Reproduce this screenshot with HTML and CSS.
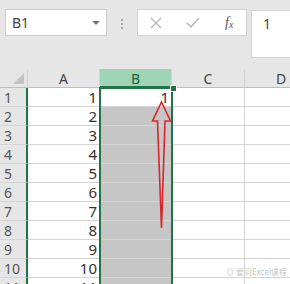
FILE: index.html
```html
<!DOCTYPE html>
<html lang="zh">
<head>
    <meta charset="UTF-8">
    <title>Sheet</title>
    <link rel="stylesheet" href="styles.css">
</head>
<body>
    <div class="toolbar">
        <div class="namebox">
            <span>B1</span>
            <span class="caret"></span>
        </div>
        <div class="grip"><i></i><i></i><i></i></div>
        <div class="fbuttons">
            <svg class="ico" width="12" height="12" viewBox="0 0 12 12"><path d="M1 1L11 11M11 1L1 11" stroke="#b4b4b4" stroke-width="1.3" fill="none"/></svg>
            <svg class="ico" width="14" height="11" viewBox="0 0 14 11"><path d="M1 6L5 10L13 1" stroke="#b4b4b4" stroke-width="1.4" fill="none"/></svg>
            <span class="fx">f<sub>x</sub></span>
        </div>
        <div class="finput">1</div>
    </div>

    <div class="sheet">
        <div class="grid">
            <div class="corner"><span class="tri"></span></div>
            <div class="colhead">A</div>
            <div class="colhead active">B</div>
            <div class="colhead">C</div>
            <div class="colhead">D</div>

            <div class="rowhead">1</div><div class="cell">1</div><div class="cell first">1</div><div class="cell"></div><div class="cell"></div>
            <div class="rowhead">2</div><div class="cell">2</div><div class="cell sel"></div><div class="cell"></div><div class="cell"></div>
            <div class="rowhead">3</div><div class="cell">3</div><div class="cell sel"></div><div class="cell"></div><div class="cell"></div>
            <div class="rowhead">4</div><div class="cell">4</div><div class="cell sel"></div><div class="cell"></div><div class="cell"></div>
            <div class="rowhead">5</div><div class="cell">5</div><div class="cell sel"></div><div class="cell"></div><div class="cell"></div>
            <div class="rowhead">6</div><div class="cell">6</div><div class="cell sel"></div><div class="cell"></div><div class="cell"></div>
            <div class="rowhead">7</div><div class="cell">7</div><div class="cell sel"></div><div class="cell"></div><div class="cell"></div>
            <div class="rowhead">8</div><div class="cell">8</div><div class="cell sel"></div><div class="cell"></div><div class="cell"></div>
            <div class="rowhead">9</div><div class="cell">9</div><div class="cell sel"></div><div class="cell"></div><div class="cell"></div>
            <div class="rowhead">10</div><div class="cell">10</div><div class="cell sel"></div><div class="cell"></div><div class="cell"></div>
            <div class="rowhead">11</div><div class="cell">11</div><div class="cell sel"></div><div class="cell"></div><div class="cell"></div>
        </div>
        <div class="selection"></div>
        <div class="handle"></div>
    </div>

    <svg class="arrow" width="290" height="284" viewBox="0 0 290 284">
        <polygon points="161.5,102 152.5,121 157.5,121 161.5,228 165,121 170.5,121" fill="none" stroke="#d8262c" stroke-width="1.6" stroke-linejoin="miter"/>
    </svg>

    <div class="watermark">⊙ 爱问Excel课程</div>
</body>
</html>
```

FILE: styles.css
```css
body {
    margin: 0;
    width: 290px;
    height: 284px;
    overflow: hidden;
    position: relative;
    background-color: #e6e6e6;
    font-family: "Noto Sans", "Noto Sans CJK SC", sans-serif;
    color: #333;
}
.toolbar {
    display: flex;
    align-items: flex-start;
    height: 69px;
    box-sizing: border-box;
    padding: 9px 0 0 5px;
}
.namebox {
    width: 102px;
    height: 27px;
    box-sizing: border-box;
    background-color: #fff;
    border: 1px solid #cdcdcd;
    display: flex;
    align-items: center;
    justify-content: space-between;
    padding: 0 6px 0 6px;
    font-size: 14px;
    color: #444;
}
.caret {
    width: 0;
    height: 0;
    border-left: 4px solid transparent;
    border-right: 4px solid transparent;
    border-top: 4px solid #777;
}
.grip {
    margin: 10px 0 0 14px;
    width: 3px;
    display: flex;
    flex-direction: column;
    gap: 2px;
}
.grip i {
    display: block;
    width: 2px;
    height: 2px;
    background-color: #a8a8a8;
}
.fbuttons {
    margin-left: 13px;
    width: 110px;
    height: 27px;
    box-sizing: border-box;
    background-color: #fff;
    border: 1px solid #d4d4d4;
    display: flex;
    align-items: center;
    padding: 0 0 0 12px;
}
.fbuttons .ico:nth-child(2) {
    margin-left: 24px;
}
.fx {
    margin-left: 25px;
    font-family: "Liberation Serif", serif;
    font-style: italic;
    font-size: 14px;
    color: #555;
}
.fx sub {
    font-size: 10px;
    vertical-align: -1px;
}
.finput {
    margin: 1px 0 0 4px;
    flex: 1;
    height: 48px;
    box-sizing: border-box;
    background-color: #fff;
    border: 1px solid #d4d4d4;
    border-right: none;
    padding: 3px 0 0 11px;
    font-size: 14px;
    color: #444;
}
.sheet {
    position: relative;
}
.grid {
    display: grid;
    grid-template-columns: 28px 72px 72px 73px 73px;
    grid-template-rows: 19px;
    grid-auto-rows: 19px;
    background-color: #fff;
}
.grid > div {
    box-sizing: border-box;
    border-right: 1px solid #d4d4d4;
    border-bottom: 1px solid #d4d4d4;
    overflow: hidden;
}
.corner {
    background-color: #e6e6e6;
    position: relative;
    border-bottom-color: #bdbdbd !important;
}
.tri {
    position: absolute;
    right: 3px;
    bottom: 3px;
    width: 0;
    height: 0;
    border-left: 11px solid transparent;
    border-bottom: 11px solid #c3c3c3;
}
.colhead {
    background-color: #e6e6e6;
    border-bottom-color: #bdbdbd !important;
    text-align: center;
    font-size: 14px;
    line-height: 19px;
    color: #444;
}
.colhead.active {
    background-color: #9fd5b7;
    color: #21603a;
    border-bottom: 2px solid #217346 !important;
}
.rowhead {
    background-color: #e6e6e6;
    border-right: 2px solid #217346 !important;
    font-size: 14px;
    line-height: 19px;
    padding-left: 4px;
    color: #555;
}
.cell {
    text-align: right;
    font-size: 15px;
    line-height: 19px;
    padding-right: 2px;
    color: #333;
}
.cell.sel {
    background-color: #c6c6c6;
}
.selection {
    position: absolute;
    left: 99px;
    top: 18px;
    width: 74px;
    height: 240px;
    box-sizing: border-box;
    border: 2px solid #217346;
}
.handle {
    position: absolute;
    left: 170px;
    top: 16px;
    width: 5px;
    height: 5px;
    background-color: #217346;
    border: 1px solid #fff;
}
.arrow {
    position: absolute;
    left: 0;
    top: 0;
    pointer-events: none;
}
.watermark {
    position: absolute;
    left: 226px;
    top: 266px;
    font-size: 8px;
    color: #c4c4c4;
    text-shadow: 0 0 2px #fff;
    white-space: nowrap;
}
```
